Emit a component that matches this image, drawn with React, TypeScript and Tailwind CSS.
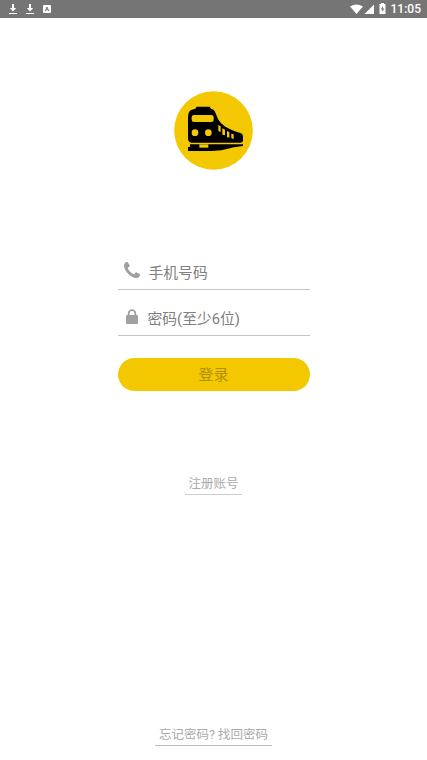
import type { ReactNode } from 'react';

interface FieldProps {
  icon: ReactNode;
  type: string;
  placeholder: string;
  className: string;
}

function DownloadIcon() {
  return (
    <svg width="10" height="12" viewBox="0 0 10 12" fill="#fff">
      <path d="M4 1h2v4h2.2L5 8.6 1.800 5H4z" />
      <path d="M1 10h8v1H1z" />
    </svg>
  );
}

function StatusBar() {
  return (
    <header className="flex h-[18px] items-center justify-between bg-[#757575] pr-[6px] pl-[8px]">
      <div className="flex items-center gap-[7px]">
        <DownloadIcon />
        <DownloadIcon />
        <svg width="8" height="8" viewBox="0 0 8 8" className="ml-[1px]">
          <rect width="8" height="8" rx="1" fill="#fff" />
          <path d="M2.3 6 4 2l1.7 4M3 4.8h2" fill="none" stroke="#757575" strokeWidth="1" />
        </svg>
      </div>
      <div className="flex items-center">
        <svg width="37" height="12" viewBox="0 0 37 12" fill="#fff">
          <path d="M0 3.6Q6.5-.6 13 3.6L6.5 11z" />
          <path d="M24 1.5V11h-9.5z" />
          <path fillRule="evenodd" d="M31 0h3v1h1.5v10h-6V1H31zm2 3L30.800 6.5h1.5v2.5L34.4 5.5H33z" />
        </svg>
        <span className="ml-[4px] font-[Roboto] text-[12px] leading-[18px] font-medium text-white">11:05</span>
      </div>
    </header>
  );
}

function TrainLogo() {
  return (
    <svg width="79" height="79" viewBox="18 18 237 237" className="mt-[73px]">
      <circle cx="136.5" cy="136.5" r="118" fill="#f4c800" />
      <path d="M86 65h39l4 6q9 1 12 9l9 22q7 13 20 22 12 8 29 14l20 7q5 2 6 9v13q-1 6-8 6H70q-8-1-10-9V96q1-16 9-21l13-4z" />
      <path d="M66 178h159v5l-27 4-38 9-30 2H60v-12h6z" />
      <g fill="#f4c800">
        <rect x="71" y="90" width="66" height="21" rx="7" />
        <circle cx="81" cy="143" r="10" />
        <circle cx="121" cy="143" r="10" />
        <path d="M151 120l7 4v17l-7-3zM163 130l8 4v17l-8-2zM177 138l7 3v17l-7-2zM190 146l7 2v14l-7-2z" />
        <path d="M94 178h27v10H94z" />
      </g>
    </svg>
  );
}

function Field({ icon, type, placeholder, className }: FieldProps) {
  return (
    <label className={`flex w-[192px] items-center border-b border-[#c4c4c4] ${className}`}>
      {icon}
      <input
        type={type}
        placeholder={placeholder}
        className="mt-[2px] w-[150px] bg-transparent text-[14.8px] leading-[22px] text-[#808080] outline-none placeholder:text-[#808080]"
      />
    </label>
  );
}

export default function App() {
  return (
    <div className="flex h-[760px] w-[427px] flex-col bg-white font-[Roboto,'Noto_Sans_CJK_SC',sans-serif]">
      <StatusBar />
      <main className="flex flex-1 flex-col items-center">
        <TrainLogo />
        <Field
          className="mt-[84px] h-[36px] pl-[6px]"
          type="tel"
          placeholder="手机号码"
          icon={
            <svg width="16" height="16" viewBox="0 0 1408 1408" fill="#a0a0a0" className="mr-[9px] mb-[3px]">
              <path d="M1408 1112q0 27-10 70.500t-21 68.500q-21 50-122 106-94 51-186 51-27 0-53-3.500t-57.500-12.500-47-14.500-55.500-20.500-49-18q-98-35-175-83-127-79-264-216T152 776q-48-77-83-175-3-9-18-49t-20.500-55.500-14.500-47-12.500-57.500T0 339q0-92 51-186Q107 52 157 31q25-11 68.500-21T296 0q14 0 21 3 18 6 53 76 11 19 30 54t35 63.500 31 53.500q3 4 17.500 25t21.500 35.500 7 28.500q0 20-28.500 50t-62 55-62 53-28.500 46q0 9 5 22.500t8.500 20.500 14 24 11.500 19q76 137 174 235t235 174q2 1 19 11.500t24 14 20.500 8.500 22.500 5q18 0 46-28.500t53-62 55-62 50-28.500q14 0 28.500 7t35.500 21.500 25 17.500q25 15 53.500 31t63.500 35 54 30q70 35 76 53 3 7 3 21z" />
            </svg>
          }
        />
        <Field
          className="mt-[10px] h-[36px] pl-[8px]"
          type="password"
          placeholder="密码(至少6位)"
          icon={
            <svg width="12" height="15" viewBox="0 0 12 15" className="mr-[10px] mb-[2px]">
              <rect y="6" width="12" height="9" rx="1" fill="#a0a0a0" />
              <path d="M2.7 7V4.4a3.3 3.3 0 0 1 6.6 0V7" fill="none" stroke="#a0a0a0" strokeWidth="1.8" />
            </svg>
          }
        />
        <button className="mt-[22px] h-[33px] w-[192px] rounded-full bg-[#f4c800] pt-[2px] text-[15px] text-[#b08f06]">登录</button>
        <a className="mt-[81px] border-b border-[#ccc] px-[3px] pt-[1px] text-[12.5px] leading-[21px] text-[#aaa]">注册账号</a>
        <a className="mt-auto mb-[14px] border-b border-[#bbb] px-[4px] pt-[1px] text-[12.5px] leading-[20px] text-[#aaa]">
          忘记密码? 找回密码
        </a>
      </main>
    </div>
  );
}
